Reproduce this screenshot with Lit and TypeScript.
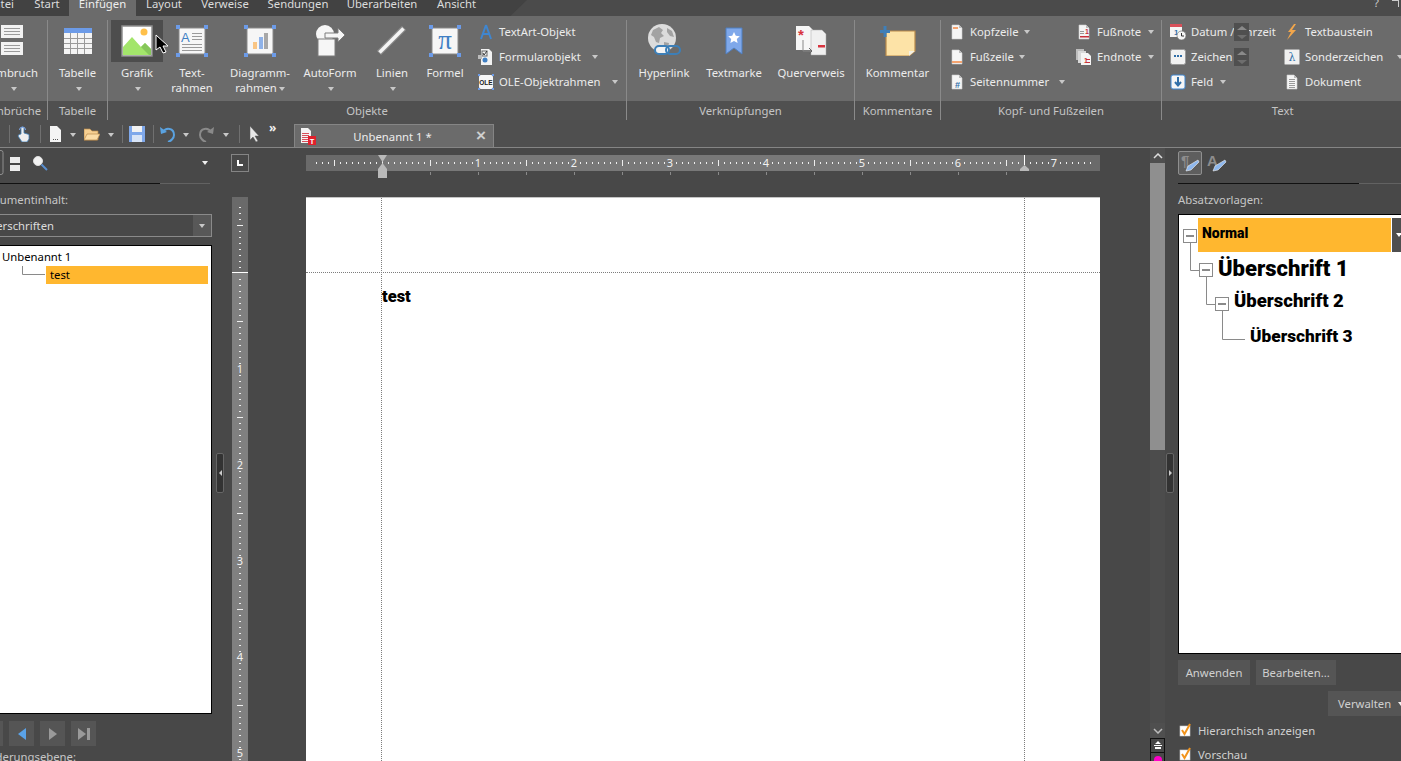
import { LitElement, html, css, svg } from 'lit';
import { customElement } from 'lit/decorators.js';

const page = (extra: unknown = '') => svg`<path d="M3 1h7l3 3v11H3z" fill="#f5f5f5" stroke="#cfcfcf" stroke-width=".6"/><path d="M10 1v3h3" fill="#bbb"/>${extra}`;
const lines = (ys: number[], x = 5, w = 6, c = '#9a9a9a') => ys.map((y) => svg`<rect x=${x} y=${y} width=${w} height="1" fill=${c}/>`);
const handles = (pts: number[][]) => pts.map(([x, y]) => svg`<rect x=${x} y=${y} width="4" height="4" fill="#6c9be8"/>`);

const BIG: Record<string, unknown> = {
  umbruch: svg`<svg width="24" height="34" viewBox="0 0 24 34"><rect x="0" y="1" width="22" height="13" fill="#f2f2f2"/><rect x="0" y="18" width="22" height="13" fill="#f2f2f2"/>${lines([4, 7, 10, 21, 24, 27], 3, 16)}</svg>`,
  tabelle: svg`<svg width="30" height="28" viewBox="0 0 30 28"><rect x="1" y="1" width="28" height="26" fill="#f4f4f4"/><rect x="1" y="1" width="28" height="5" fill="#6c9be8"/>${[7, 14, 21].map((x) => svg`<rect x=${x} y="6" width="1" height="21" fill="#9a9a9a"/>`)}${[11, 16, 21].map((y) => svg`<rect x="1" y=${y} width="28" height="1" fill="#9a9a9a"/>`)}</svg>`,
  grafik: svg`<svg width="32" height="32" viewBox="0 0 32 32"><rect x="1" y="1" width="30" height="30" fill="#fff" stroke="#8f8f8f" stroke-width="1.5"/><circle cx="23" cy="7" r="3.5" fill="#ffc04a"/><path d="M2 30V22L11 12L20 22L24 18L30 24V30z" fill="#a3e56b"/><path d="M20 22L24 18L30 24V30H28z" fill="#86c65a"/></svg>`,
  text: svg`<svg width="32" height="32" viewBox="0 0 32 32"><rect x="3" y="3" width="26" height="26" fill="#f6f6f6" stroke="#8a8a8a"/>${handles([[0, 0], [28, 0], [0, 28], [28, 28]])}<text x="5" y="17" font-family="Liberation Sans" font-size="13" fill="#3f7fc4">A</text>${lines([8, 11, 14], 16, 10)}${lines([19, 22, 25], 6, 20)}</svg>`,
  diagramm: svg`<svg width="32" height="32" viewBox="0 0 32 32"><rect x="3" y="3" width="26" height="26" fill="#f6f6f6" stroke="#8a8a8a"/>${handles([[0, 0], [28, 0], [0, 28], [28, 28]])}<rect x="9" y="17" width="4" height="7" fill="#f9c584"/><rect x="15" y="12" width="4" height="12" fill="#8fb2e8"/><rect x="20" y="8" width="4" height="16" fill="#a8a8a8"/></svg>`,
  autoform: svg`<svg width="32" height="32" viewBox="0 0 32 32"><circle cx="11" cy="9" r="9" fill="#f6f6f6"/><rect x="4" y="14" width="17" height="17" fill="#f6f6f6" stroke="#7c7c7c"/><path d="M11 8h13V3l7 7-7 7v-4H11z" fill="#f6f6f6" stroke="#7c7c7c"/></svg>`,
  linien: svg`<svg width="30" height="30" viewBox="0 0 30 30"><path d="M2 27L27 2" stroke="#8a8a8a" stroke-width="6"/><path d="M2.500 26.500L26.500 2.500" stroke="#f4f4f4" stroke-width="3.500"/></svg>`,
  formel: svg`<svg width="32" height="32" viewBox="0 0 32 32"><rect x="3" y="3" width="26" height="26" fill="#f6f6f6" stroke="#8a8a8a"/>${handles([[0, 0], [28, 0], [0, 28], [28, 28]])}<text x="16" y="24" text-anchor="middle" font-family="Liberation Serif" font-size="27" fill="#3f7fc4">π</text></svg>`,
  hyperlink: svg`<svg width="34" height="34" viewBox="0 0 34 34"><circle cx="15" cy="14" r="14" fill="#dcdcdc"/><path d="M6 6l6-3 4 3-2 3 3 3-4 2-1 5-3-1-2-5-3-2zM20 4l5 3 2 6-4-1-3-4zM17 18l5 1-1 5-4 1z" fill="#a2a2a2"/><rect x="8" y="22" width="14" height="8" rx="4" fill="#f4f4f4" stroke="#3c7fb8" stroke-width="2"/><rect x="19" y="22" width="14" height="8" rx="4" fill="none" stroke="#3c7fb8" stroke-width="2"/></svg>`,
  textmarke: svg`<svg width="18" height="28" viewBox="0 0 18 28"><path d="M1 1h16v26l-8-6-8 6z" fill="#7fa8ea" stroke="#4f7fc0"/><path d="M9 5l1.800 3.800 4 .5-3 2.800.8 4L9 14l-3.600 2.100.8-4-3-2.800 4-.5z" fill="#fff"/></svg>`,
  querverweis: svg`<svg width="32" height="32" viewBox="0 0 32 32"><path d="M1 1h13l4 4v20H1z" fill="#f6f6f6"/><path d="M16 5h11l4 4v21H16z" fill="#f0f0f0" stroke="#aaa" stroke-width=".5"/><text x="3" y="15" font-family="Liberation Sans" font-size="15" font-weight="700" fill="#d8343f">*</text><path d="M8 15v11h8" fill="none" stroke="#888"/><path d="M14 23l3 3-3 3" fill="none" stroke="#666"/><rect x="23" y="20" width="7" height="2.500" fill="#d8343f"/></svg>`,
  kommentar: svg`<svg width="36" height="30" viewBox="0 0 36 30"><path d="M6 5h29v20l-6 5H6z" fill="#fde3a7" stroke="#b98a4a" stroke-width="1.200"/><path d="M29 30v-5h6z" fill="#f3f0e4"/><rect x="0" y="4" width="10" height="3" fill="#3f7fb8"/><rect x="3.500" y="0" width="3" height="11" fill="#3f7fb8"/></svg>`,
};

const ico = (body: unknown) => svg`<svg width="16" height="16" viewBox="0 0 16 16">${body}</svg>`;
const SMALL: Record<string, unknown> = {
  textart: ico(svg`<path d="M8 1L3 15M8 1l5 14M5 10h6" fill="none" stroke="#3f86d0" stroke-width="2"/>`),
  form: ico(svg`<path d="M3 0h8l3 3v13H3z" fill="#f2f2f2"/><rect x="4" y="2" width="5" height="5" fill="none" stroke="#666"/><path d="M5 4l1 2 3-4" fill="none" stroke="#333"/><circle cx="7" cy="11" r="2.500" fill="#3f7fc4"/><rect x="0" y="6" width="4" height="4" fill="#bbb"/>`),
  ole: ico(svg`<rect x="1" y="1" width="14" height="14" rx="2" fill="#f6f6f6"/><text x="8" y="10.500" text-anchor="middle" font-family="Liberation Sans" font-size="6.500" font-weight="700" fill="#222">OLE</text><rect x="0" y="0" width="2" height="2" fill="#6c9be8"/><rect x="14" y="0" width="2" height="2" fill="#6c9be8"/><rect x="0" y="14" width="2" height="2" fill="#6c9be8"/><rect x="14" y="14" width="2" height="2" fill="#6c9be8"/>`),
  kopf: ico(page(svg`<rect x="4" y="3" width="5" height="2" fill="#f4a36f"/>`)),
  fuss: ico(page(svg`<rect x="3" y="12" width="10" height="2" fill="#f4a36f"/>`)),
  seiten: ico(page(svg`<text x="8.500" y="14" text-anchor="middle" font-family="Liberation Sans" font-size="9" font-weight="700" fill="#2f6ea8">#</text>`)),
  fussnote: ico(page(svg`${lines([7, 9], 4, 4)}<text x="11" y="10" text-anchor="middle" font-family="Liberation Sans" font-size="7" font-weight="700" fill="#c8323c">1</text><rect x="4" y="12" width="9" height="1.500" fill="#c8323c"/>`)),
  endnote: ico(svg`<path d="M0 0h8v11H0z" fill="#bdbdbd"/><path d="M2 2h8v12H2z" fill="#d8d8d8"/><path d="M5 4h7l3 3v9H5z" fill="#f5f5f5"/><text x="8" y="14" font-family="Liberation Sans" font-size="7" font-weight="700" fill="#c8323c">1</text><rect x="10" y="10" width="4" height="1" fill="#c8323c"/><rect x="10" y="13" width="4" height="1" fill="#c8323c"/>`),
  datum: ico(svg`<rect x="0" y="1" width="12" height="12" fill="#f5f5f5"/><rect x="0" y="0" width="12" height="3" fill="#d8505a"/><text x="4" y="11" font-family="Liberation Sans" font-size="8" font-weight="700" fill="#2f6ea8">1</text><circle cx="11.500" cy="11.500" r="4.500" fill="#f5f5f5" stroke="#777" stroke-width=".7"/><path d="M11.500 9v3h2.500" fill="none" stroke="#333"/>`),
  zeichen: ico(svg`<rect x="0.500" y="0.500" width="15" height="15" rx="2" fill="#f2f2f2" stroke="#999"/><rect x="4" y="6" width="2" height="2" fill="#2f6ea8"/><rect x="7" y="6" width="2" height="2" fill="#2f6ea8"/><rect x="10" y="6" width="2" height="2" fill="#2f6ea8"/>`),
  feld: ico(svg`<rect x="1" y="1" width="14" height="14" rx="2" fill="#f6f6f6" stroke="#3f86d0"/><path d="M8 3v8M5 8l3 3.500L11 8" fill="none" stroke="#2f6ea8" stroke-width="2"/>`),
  baustein: ico(svg`<path d="M10 0L4 8h3l-4 8 9-10H8l4-6z" fill="#f2a64b"/>`),
  sonder: ico(svg`<rect x="0.500" y="0.500" width="15" height="15" rx="1" fill="#f0f0f0" stroke="#aaa"/><text x="8" y="12" text-anchor="middle" font-family="DejaVu Serif" font-size="11" fill="#2f6ea8">λ</text>`),
  dokument: ico(page(lines([5, 7, 9, 11, 13], 5, 6))),
};

type Big = { icon: string; lines: string[]; w: number; arrow?: boolean; hover?: boolean };
// arrow: gap in px between the label and its dropdown arrow
type Small = { icon: string; label: string; arrow?: number };

const OBJEKTE: Big[] = [
  { icon: 'grafik', lines: ['Grafik', ''], w: 52, arrow: true, hover: true },
  { icon: 'text', lines: ['Text-', 'rahmen'], w: 58 },
  { icon: 'diagramm', lines: ['Diagramm-', 'rahmen'], w: 78, arrow: true },
  { icon: 'autoform', lines: ['AutoForm', ''], w: 62, arrow: true },
  { icon: 'linien', lines: ['Linien', ''], w: 62, arrow: true },
  { icon: 'formel', lines: ['Formel'], w: 44 },
];

const TABS: [string, number][] = [['Datei', 50], ['Start', 44], ['Einfügen', 67], ['Layout', 56], ['Verweise', 66], ['Sendungen', 80], ['Überarbeiten', 88], ['Ansicht', 61]];

const hRuler = () => {
  const x0 = 76;
  const ticks = [];
  for (let k = -11; k * 6 + x0 < 790; k++) {
    const x = x0 + k * 6;
    if (k % 16 === 0 && k > 0) ticks.push(svg`<text x=${x} y="12" text-anchor="middle" class="rn">${k / 16}</text>`);
    else if (k % 8 === 0) ticks.push(svg`<rect x=${x} y="5" width="1" height="6" fill="#eee"/>`);
    else ticks.push(svg`<rect x=${x} y="7" width="1" height="2" fill="#eee"/>`);
  }
  const stops = [];
  for (let k = 1; k * 48 + x0 < 720; k++) stops.push(svg`<rect x=${x0 + k * 48} y="17" width="1" height="3" fill="#8a8a8a"/>`);
  return svg`<svg class="hr" width="794" height="26" viewBox="0 0 794 26">
    <rect width="794" height="16" fill="#6a6a6a"/><rect x="76" width="642" height="16" fill="#787878"/>
    ${ticks}${stops}
    <rect x="718" y="0" width="1" height="10" fill="#fff"/>
    <path d="M72 0h9l-4.500 7z" fill="#b9b9b9"/><path d="M76.500 8l4.500 6v2h-9v-2z" fill="#b9b9b9"/><rect x="72" y="16" width="9" height="7" fill="#b9b9b9"/>
    <path d="M718.500 10l4.500 4v2h-9v-2z" fill="#b9b9b9"/></svg>`;
};

const vRuler = () => {
  const y0 = 76;
  const ticks = [];
  for (let k = -11; k * 6 + y0 < 564; k++) {
    const y = y0 + k * 6;
    if (k === 0) continue;
    if (k % 16 === 0 && k > 0) ticks.push(svg`<text x="8" y=${y + 4} text-anchor="middle" class="rn">${k / 16}</text>`);
    else if (k % 8 === 0) ticks.push(svg`<rect x="5" y=${y} width="6" height="1" fill="#eee"/>`);
    else ticks.push(svg`<rect x="7" y=${y} width="2" height="1" fill="#eee"/>`);
  }
  return svg`<svg class="vr" width="16" height="564" viewBox="0 0 16 564">
    <rect width="16" height="564" fill="#808080"/><rect width="16" height="75" fill="#6a6a6a"/>
    <rect y="75" width="16" height="1" fill="#fff"/>${ticks}</svg>`;
};

@customElement('app-root')
export class AppRoot extends LitElement {
  static styles = css`
    :host {
      display: block;
      position: relative;
      width: 1401px;
      height: 761px;
      overflow: hidden;
      background: #484848;
      color: #e6e6e6;
      font: 11.3px/15px "Noto Sans", sans-serif;
    }
    .tabs {
      display: flex;
      position: relative;
      height: 16px;
      margin-left: -25px;
      background: #4b4b4b;
      overflow: hidden;
    }
    .tabs::before {
      content: "";
      position: absolute;
      left: 0;
      top: 0;
      width: 552px;
      height: 16px;
      background: #424242;
      clip-path: polygon(0 0, 100% 0, 97% 100%, 0 100%);
    }
    .tab {
      position: relative;
      text-align: center;
      line-height: 8px;
      height: 16px;
      color: #dcdcdc;
    }
    .tab.on { background: #6b6b6b; color: #eee; }
    .help {
      position: absolute;
      right: 22px;
      top: -5px;
      line-height: 16px;
      color: #ccc;
    }
    .help-x {
      position: absolute;
      right: 2px;
      top: 0;
      width: 6px;
      height: 6px;
      border-top: 1px solid #ccc;
      border-right: 1px solid #ccc;
    }

    .ribbon {
      display: flex;
      height: 104px;
      padding-top: 4px;
      box-sizing: border-box;
      background: linear-gradient(#6b6b6b 85px, #505050 85px);
    }
    .group {
      flex: none;
      box-sizing: border-box;
      height: 100px;
      border-left: 1px solid #8a8a8a;
    }
    .g0 { width: 68px; margin-left: -21px; border-left: 0; }
    .g1 { width: 60px; }
    .g2 { width: 519px; }
    .g3 { width: 228px; }
    .g4 { width: 86px; }
    .g5 { width: 221px; }
    .g6 { flex: 1; }
    .body { display: flex; height: 81px; }
    .g0 .body, .g1 .body, .g4 .body { justify-content: center; }
    .g2 .body { padding-left: 3px; }
    .g3 .body { padding-left: 5px; }
    .g5 .body, .g6 .body { padding-left: 6px; }
    .title { height: 19px; line-height: 19px; text-align: center; color: #c4c4c4; }

    .big { flex: none; text-align: center; color: #ececec; }
    .big .pic { height: 42px; display: flex; align-items: center; justify-content: center; }
    .big .pic.hover { background: #4d4d4d; }
    .big .cap { margin-top: 3px; white-space: nowrap; }
    .big .ln { display: block; height: 15px; }
    .arr {
      display: inline-block;
      width: 0;
      height: 0;
      border: 3.5px solid transparent;
      border-bottom: 0;
      border-top: 4px solid #c8c8c8;
      vertical-align: middle;
    }
    .ln .arr { margin-left: 2px; }
    .col { flex: none; display: flex; flex-direction: column; margin-top: -1px; }
    .col.objs { margin-left: 9px; }
    .c1 { width: 127px; }
    .c2 { width: 88px; }
    .c3 { width: 114px; }
    .small {
      position: relative;
      display: flex;
      align-items: center;
      height: 25px;
      white-space: nowrap;
      color: #ececec;
    }
    .small .si { width: 20px; margin-right: 3px; display: flex; justify-content: center; }
    .spin {
      position: absolute;
      left: 66px;
      top: 4px;
      width: 15px;
      height: 18px;
      background: #4f4f4f;
      display: flex;
      flex-direction: column;
      align-items: center;
      justify-content: space-around;
    }
    .spin i { display: block; width: 0; border: 5px solid transparent; }
    .spin i.up { border-top: 0; border-bottom: 4px solid #8a8a8a; }
    .spin i.dn { border-bottom: 0; border-top: 4px solid #6e6e6e; }

    .qa {
      display: flex;
      position: relative;
      height: 27px;
      background: #4f4f4f;
      border-bottom: 1px solid #858585;
      box-sizing: content-box;
    }
    .qa .slot { position: absolute; top: 6px; display: flex; }
    .qa .slot.drop { top: 13px; }
    .qa .slot.more { left: 269px; top: 0; font-weight: 700; font-size: 12px; color: #eee; }
    .sep { width: 1px; height: 18px; background: #707070; position: absolute; top: 5px; }
    .doctab {
      position: absolute;
      left: 294px;
      top: 4px;
      width: 200px;
      height: 23px;
      box-sizing: border-box;
      background: #6b6b6b;
      border: 1px solid #858585;
      border-bottom: 0;
      display: flex;
      align-items: center;
    }
    .doctab svg { margin-left: 5px; flex: none; }
    .doctab .name { flex: 1; text-align: center; color: #ececec; }
    .doctab .close { width: 24px; text-align: center; font: 700 17px/20px "Liberation Sans", sans-serif; color: #cfcfcf; }

    .main {
      display: grid;
      grid-template-columns: 216px 16px 918px 15px 13px 1fr;
      height: 613px;
      overflow: hidden;
    }
    .panel { display: flex; flex-direction: column; padding-top: 2px; min-width: 0; color: #c6c6c6; }
    .left { width: 242px; margin-left: -30px; }
    .ptools { position: relative; display: flex; align-items: center; height: 25px; flex: none; }
    .ptools .abs { position: absolute; left: 0; }
    .ptools .lens { position: absolute; left: 62px; }
    .ptools .arr { position: absolute; left: 232px; border-top-color: #f0f0f0; }
    .psep { flex: none; height: 1px; margin: 8px 2px 0 0; background: linear-gradient(90deg, #111 79%, #626262 79%); }
    .right .psep { background: linear-gradient(90deg, #111 70%, #626262 70%); }
    .plabel { flex: none; margin-top: 8px; line-height: 16px; white-space: nowrap; }
    .plabel.crop { width: 98px; text-align: right; }
    .combo {
      flex: none;
      display: flex;
      height: 23px;
      box-sizing: border-box;
      margin-top: 6px;
      border: 1px solid #8a8a8a;
      line-height: 21px;
    }
    .combo .val { width: 83px; text-align: right; color: #dcdcdc; }
    .combo .btn { margin-left: auto; width: 18px; background: #585858; display: flex; align-items: center; justify-content: center; }
    .ltree {
      flex: none;
      height: 469px;
      box-sizing: border-box;
      margin-top: 8px;
      background: #fff;
      border: 1px solid #000;
      color: #000;
      position: relative;
      padding-top: 3px;
    }
    .ltree .root { padding-left: 31px; height: 17px; line-height: 15px; }
    .ltree .sel { margin: 0 3px 0 75px; height: 18px; line-height: 18px; background: #ffb72f; padding-left: 4px; }
    .ltree svg { position: absolute; left: 0; top: 0; }
    .nav { flex: none; display: flex; gap: 6px; margin-top: 7px; margin-left: 8px; }
    .nav b { width: 25px; height: 25px; background: #555; display: flex; align-items: center; justify-content: center; }
    .plabel.foot { margin-top: 3px; width: 106px; text-align: right; }

    .handle {
      width: 8px;
      height: 40px;
      margin-top: 305px;
      box-sizing: border-box;
      background: #333;
      border: 1px solid #666;
      border-radius: 2px;
      display: flex;
      align-items: center;
      justify-content: center;
    }
    .handle i { width: 0; border: 3px solid transparent; border-left: 0; border-right: 3px solid #ccc; }
    .handle.r { margin-left: 1px; }
    .handle.r i { border-right: 0; border-left: 3px solid #ccc; }

    .center { display: flex; flex-direction: column; min-width: 0; }
    .rulerrow { position: relative; display: flex; flex: none; height: 49px; }
    .corner {
      flex: none;
      width: 18px;
      height: 18px;
      box-sizing: border-box;
      margin: 6px 0 0 -1px;
      border: 1px solid #858585;
      display: flex;
      align-items: center;
      justify-content: center;
    }
    .corner i { width: 4px; height: 4px; border-left: 2px solid #fff; border-bottom: 2px solid #fff; }
    .hr { margin: 7px 0 0 57px; flex: none; }
    .rn { font: 11px "Noto Sans", sans-serif; fill: #f2f2f2; }
    .docrow { display: flex; flex: 1; min-height: 0; }
    .vr { flex: none; display: block; }
    .page {
      position: relative;
      flex: none;
      margin-left: 58px;
      width: 794px;
      height: 564px;
      background: #fff;
      color: #000;
      border-top: 1px solid #c4c4c4;
      box-sizing: border-box;
    }
    .guide { position: absolute; }
    .guide.v { top: 0; bottom: 0; width: 0; border-left: 1px dotted #7d7d7d; }
    .guide.m1 { left: 75px; }
    .guide.m2 { left: 718px; }
    .guide.h { left: 0; right: 0; height: 0; border-top: 1px dotted #7d7d7d; top: 74px; }
    .pagetext {
      padding: 89px 0 0 76px;
      font: 900 16.500px/20px Roboto, sans-serif;
    }

    .scroll { display: flex; flex-direction: column; background: #4c4c4c; height: 613px; overflow: hidden; }
    .scroll .chev { flex: none; height: 15px; display: flex; align-items: center; justify-content: center; background: #4f4f4f; }
    .scroll .thumb { flex: none; height: 287px; background: #8f8f8f; }
    .scroll .track { flex: none; height: 273px; }
    .scroll .mini {
      flex: none;
      height: 14px;
      background: #484848;
      border: 1px solid #111;
      border-width: 1px 1px 0;
      box-sizing: border-box;
      display: flex;
      align-items: center;
      justify-content: center;
    }

    .right { width: 260px; }
    .pbtn {
      width: 24px;
      height: 24px;
      box-sizing: border-box;
      border: 1px solid #8f8f8f;
      border-radius: 2px;
      background: #5e5e5e;
      display: flex;
      align-items: center;
      justify-content: center;
      margin-right: 5px;
    }
    .rtree {
      flex: none;
      position: relative;
      height: 440px;
      box-sizing: border-box;
      margin-top: 6px;
      background: #fff;
      border: 1px solid #000;
      padding-top: 3px;
      color: #000;
      font-family: Roboto, sans-serif;
      font-weight: 900;
    }
    .rtree svg { position: absolute; left: 0; top: 0; }
    .style { display: flex; align-items: center; white-space: nowrap; }
    .style.s0 { margin-left: 19px; height: 34px; font-size: 14px; }
    .style.s0 .hl { width: 189px; height: 34px; line-height: 31px; background: #ffb72f; padding-left: 4px; }
    .style.s0 .more { margin-left: 1px; width: 40px; height: 34px; background: #4f4f4f; display: flex; align-items: center; padding-left: 4px; box-sizing: border-box; }
    .style.s0 .arr { border-top-color: #fff; }
    .style.s1 { margin-left: 39px; height: 33px; font-size: 22px; }
    .style.s2 { margin-left: 55px; height: 33px; font-size: 18.500px; }
    .style.s3 { margin-left: 71px; height: 36px; font-size: 17.300px; }
    .btns { flex: none; display: flex; gap: 6px; margin-top: 6px; }
    .btn2 { height: 25px; line-height: 25px; background: #555; text-align: center; color: #d0d0d0; flex: none; box-sizing: border-box; }
    .btn2.a { width: 72px; }
    .btn2.b { width: 80px; }
    .btn2.c { width: 90px; margin: 6px 0 0 150px; padding-left: 10px; display: flex; align-items: center; gap: 7px; }
    .btn2.c .arr { border-top-color: #eee; }
    .chk { flex: none; display: flex; align-items: center; height: 24px; color: #d0d0d0; gap: 7px; padding-left: 1px; }
    .chk.first { margin-top: 2px; }
    .cursor { position: absolute; left: 155px; top: 34px; }
  `;

  private big(b: Big) {
    const last = b.lines.length - 1;
    return html`<div class="big" style="width:${b.w}px">
      <div class="pic ${b.hover ? 'hover' : ''}">${BIG[b.icon]}</div>
      <div class="cap">
        ${b.lines.map((l, i) => html`<span class="ln">${l}${b.arrow && i === last ? html`<span class="arr"></span>` : ''}</span>`)}
      </div>
    </div>`;
  }

  private small(s: Small, spin = false) {
    return html`<div class="small">
      <span class="si">${SMALL[s.icon]}</span>${s.label}${s.arrow ? html`<span class="arr" style="margin-left:${s.arrow}px"></span>` : ''}
      ${spin ? html`<span class="spin"><i class="up"></i><i class="dn"></i></span>` : ''}
    </div>`;
  }

  private qaIcon(left: number, body: unknown) {
    return html`<span class="slot" style="left:${left}px">${body}</span>`;
  }

  private qaDrop(left: number) {
    return html`<span class="slot drop" style="left:${left}px"><span class="arr"></span></span>`;
  }

  render() {
    const brush = svg`<path d="M18 7l1 2-8 8-5 1 2-5z" fill="#8fb8ee" stroke="#eee" stroke-width=".6"/>`;
    const tick = svg`<svg width="12" height="14" viewBox="0 0 12 14"><rect x="1" y="3" width="10" height="10" fill="#fff" stroke="#ccc" stroke-width=".6"/><path d="M3 7l2.500 4L11 1" fill="none" stroke="#f2941c" stroke-width="2"/></svg>`;
    return html`
      <div class="tabs">
        ${TABS.map(([t, w]) => html`<div class="tab ${t === 'Einfügen' ? 'on' : ''}" style="width:${w}px">${t}</div>`)}
        <span class="help">?</span><span class="help-x"></span>
      </div>

      <div class="ribbon">
        <div class="group g0">
          <div class="body">${this.big({ icon: 'umbruch', lines: ['Umbruch', ''], w: 68, arrow: true })}</div>
          <div class="title">Umbrüche</div>
        </div>
        <div class="group g1">
          <div class="body">${this.big({ icon: 'tabelle', lines: ['Tabelle', ''], w: 59, arrow: true })}</div>
          <div class="title">Tabelle</div>
        </div>
        <div class="group g2">
          <div class="body">
            ${OBJEKTE.map((b) => this.big(b))}
            <div class="col objs">
              ${this.small({ icon: 'textart', label: 'TextArt-Objekt' })}
              ${this.small({ icon: 'form', label: 'Formularobjekt', arrow: 11 })}
              ${this.small({ icon: 'ole', label: 'OLE-Objektrahmen', arrow: 11 })}
            </div>
          </div>
          <div class="title">Objekte</div>
        </div>
        <div class="group g3">
          <div class="body">
            ${this.big({ icon: 'hyperlink', lines: ['Hyperlink'], w: 64 })}
            ${this.big({ icon: 'textmarke', lines: ['Textmarke'], w: 76 })}
            ${this.big({ icon: 'querverweis', lines: ['Querverweis'], w: 78 })}
          </div>
          <div class="title">Verknüpfungen</div>
        </div>
        <div class="group g4">
          <div class="body">${this.big({ icon: 'kommentar', lines: ['Kommentar'], w: 85 })}</div>
          <div class="title">Kommentare</div>
        </div>
        <div class="group g5">
          <div class="body">
            <div class="col c1">
              ${this.small({ icon: 'kopf', label: 'Kopfzeile', arrow: 5 })}
              ${this.small({ icon: 'fuss', label: 'Fußzeile', arrow: 5 })}
              ${this.small({ icon: 'seiten', label: 'Seitennummer', arrow: 10 })}
            </div>
            <div class="col c2">
              ${this.small({ icon: 'fussnote', label: 'Fußnote', arrow: 7 })}
              ${this.small({ icon: 'endnote', label: 'Endnote', arrow: 7 })}
            </div>
          </div>
          <div class="title">Kopf- und Fußzeilen</div>
        </div>
        <div class="group g6">
          <div class="body">
            <div class="col c3">
              ${this.small({ icon: 'datum', label: 'Datum / Uhrzeit' }, true)}
              ${this.small({ icon: 'zeichen', label: 'Zeichen' }, true)}
              ${this.small({ icon: 'feld', label: 'Feld', arrow: 7 })}
            </div>
            <div class="col">
              ${this.small({ icon: 'baustein', label: 'Textbaustein' })}
              ${this.small({ icon: 'sonder', label: 'Sonderzeichen', arrow: 14 })}
              ${this.small({ icon: 'dokument', label: 'Dokument' })}
            </div>
          </div>
          <div class="title">Text</div>
        </div>
      </div>

      <div class="qa">
        ${[9, 40, 122, 153, 239].map((x) => html`<span class="sep" style="left:${x}px"></span>`)}
        ${this.qaIcon(16, ico(svg`<path d="M5 8V2.500a1.500 1.500 0 0 1 3 0V7l5 1.500V13l-2 3H6L2 10l1-1.500z" fill="#eee" stroke="#3f7fb8" stroke-width=".8"/><path d="M3.500 4a3 3 0 0 1 6 0" fill="none" stroke="#7fa8ea"/>`))}
        ${this.qaIcon(47, ico(svg`<path d="M3 0h7l4 4v12H3z" fill="#f4f4f4"/><rect x="6" y="13" width="1" height="1" fill="#555"/><rect x="8" y="13" width="1" height="1" fill="#555"/><rect x="10" y="13" width="1" height="1" fill="#555"/>`))}
        ${this.qaDrop(70)}
        ${this.qaIcon(84, ico(svg`<path d="M0 3h6l2 2h6v9H0z" fill="#f6cf91" stroke="#b98a4a" stroke-width=".7"/><path d="M0 14l3-6h13l-3 6z" fill="#fbdca6" stroke="#b98a4a" stroke-width=".7"/>`))}
        ${this.qaDrop(108)}
        ${this.qaIcon(129, ico(svg`<rect x="0" y="0" width="16" height="16" fill="#7fa8ea"/><rect x="3" y="0" width="10" height="6" fill="#f2f2f2"/><rect x="3" y="9" width="10" height="7" fill="#d8e4f6"/>`))}
        ${this.qaIcon(159, ico(svg`<path d="M4 6c3-5 11-4 11 3 0 3-3 6-6 7" fill="none" stroke="#5aa2e0" stroke-width="2"/><path d="M1 1l1 7 6-2z" fill="#5aa2e0"/>`))}
        ${this.qaDrop(183)}
        ${this.qaIcon(199, ico(svg`<path d="M12 6C9 1 1 2 1 9c0 3 3 6 6 7" fill="none" stroke="#8a8a8a" stroke-width="2"/><path d="M15 1l-1 7-6-2z" fill="#8a8a8a"/>`))}
        ${this.qaDrop(223)}
        ${this.qaIcon(247, ico(svg`<path d="M3 0v14l3-3 3 5 2-1-3-5h4z" fill="#e8e8e8" stroke="#555" stroke-width=".5"/>`))}
        <span class="slot more">»</span>
        <div class="doctab">
          <svg width="16" height="17" viewBox="0 0 16 17"><path d="M1 0h7l3 3v12H1z" fill="#f4f4f4"/>${lines([5, 7, 9, 11, 13], 2, 7, '#d8505a')}<rect x="8" y="8" width="8" height="9" fill="#e0202c"/><text x="12" y="15.500" text-anchor="middle" font-family="Liberation Sans" font-size="7.500" font-weight="700" fill="#fff">T</text></svg>
          <span class="name">Unbenannt 1 *</span>
          <span class="close">×</span>
        </div>
      </div>

      <div class="main">
        <div class="panel left">
          <div class="ptools">
            <svg class="abs" width="60" height="25" viewBox="0 0 60 25">
              <rect x="-10" y="0.500" width="43" height="24" rx="2" fill="none" stroke="#8f8f8f"/>
              <rect x="40" y="7" width="10" height="6" fill="#eee"/><rect x="40" y="15" width="10" height="6" fill="#eee"/>
            </svg>
            <svg class="lens" width="16" height="16" viewBox="0 0 16 16"><circle cx="6" cy="6" r="4.500" fill="#f2f2f2" stroke="#ddd"/><path d="M9.500 9.500L15 15" stroke="#5a8fd0" stroke-width="2"/></svg>
            <span class="arr"></span>
          </div>
          <div class="psep"></div>
          <div class="plabel crop">Dokumentinhalt:</div>
          <div class="combo"><span class="val">Überschriften</span><span class="btn"><span class="arr"></span></span></div>
          <div class="ltree">
            <svg width="100" height="40"><path d="M51.500 20v8.500H74" fill="none" stroke="#8a8a8a"/></svg>
            <div class="root">Unbenannt 1</div>
            <div class="sel">test</div>
          </div>
          <div class="nav">
            <b></b>
            <b><svg width="8" height="12" viewBox="0 0 8 12"><path d="M8 0v12L0 6z" fill="#5aa2e8"/></svg></b>
            <b><svg width="8" height="12" viewBox="0 0 8 12"><path d="M0 0v12l8-6z" fill="#9a9a9a"/></svg></b>
            <b><svg width="12" height="12" viewBox="0 0 12 12"><path d="M0 0v12l8-6z" fill="#9a9a9a"/><rect x="9" width="3" height="12" fill="#9a9a9a"/></svg></b>
          </div>
          <div class="plabel foot">Änderungsebene:</div>
        </div>

        <div><div class="handle"><i></i></div></div>

        <div class="center">
          <div class="rulerrow">
            <div class="corner"><i></i></div>
            ${hRuler()}
          </div>
          <div class="docrow">
            ${vRuler()}
            <div class="page">
              <span class="guide v m1"></span>
              <span class="guide v m2"></span>
              <span class="guide h"></span>
              <div class="pagetext">test</div>
            </div>
          </div>
        </div>

        <div class="scroll">
          <div class="chev"><svg width="10" height="6" viewBox="0 0 10 6"><path d="M1 5l4-4 4 4" fill="none" stroke="#ddd" stroke-width="1.500"/></svg></div>
          <div class="thumb"></div>
          <div class="track"></div>
          <div class="chev"><svg width="10" height="6" viewBox="0 0 10 6"><path d="M1 1l4 4 4-4" fill="none" stroke="#bbb" stroke-width="1.500"/></svg></div>
          <div class="mini"><svg width="8" height="10" viewBox="0 0 8 10"><path d="M4 0L1 3h6zM0 4h8v1H0zM1 6h6v2H1z" fill="#fff"/></svg></div>
          <div class="mini"><svg width="8" height="8" viewBox="0 0 8 8"><circle cx="4" cy="4" r="4" fill="#ff00c8"/></svg></div>
        </div>

        <div><div class="handle r"><i></i></div></div>

        <div class="panel right">
          <div class="ptools">
            <span class="pbtn"><svg width="20" height="20" viewBox="0 0 20 20"><text x="1" y="13" font-family="Liberation Sans" font-size="15" font-weight="700" fill="#8d8d8d">¶</text>${brush}</svg></span>
            <svg width="20" height="20" viewBox="0 0 20 20"><text x="0" y="13" font-family="Liberation Sans" font-size="15" font-weight="700" fill="#8d8d8d">A</text>${brush}</svg>
          </div>
          <div class="psep"></div>
          <div class="plabel">Absatzvorlagen:</div>
          <div class="rtree">
            <svg width="90" height="150" viewBox="0 0 90 150">
              <path d="M11.500 27v28.500H20M27.500 61v28.500H36M43.500 95v29.500H66" fill="none" stroke="#8a8a8a"/>
              ${[[4, 14], [20, 48], [36, 82]].map(([x, y]) => svg`<rect x=${x + .5} y=${y + .5} width="13" height="13" fill="#fff" stroke="#8a8a8a"/><rect x=${x + 3} y=${y + 6} width="8" height="2" fill="#8a8a8a"/>`)}
            </svg>
            <div class="style s0"><span class="hl">Normal</span><span class="more"><span class="arr"></span></span></div>
            <div class="style s1">Überschrift 1</div>
            <div class="style s2">Überschrift 2</div>
            <div class="style s3">Überschrift 3</div>
          </div>
          <div class="btns"><div class="btn2 a">Anwenden</div><div class="btn2 b">Bearbeiten...</div></div>
          <div class="btn2 c">Verwalten<span class="arr"></span></div>
          <div class="chk first">${tick} Hierarchisch anzeigen</div>
          <div class="chk">${tick} Vorschau</div>
        </div>
      </div>

      <svg class="cursor" width="14" height="20" viewBox="0 0 14 20"><path d="M1 1v15l4-3 3 6 3-1-3-6h5z" fill="#000" stroke="#fff" stroke-width="1"/></svg>
    `;
  }
}
